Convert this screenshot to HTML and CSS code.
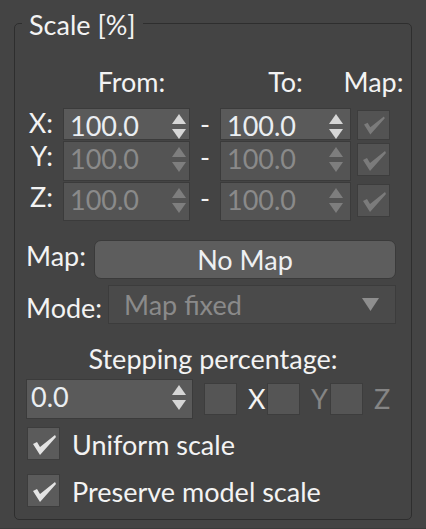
FILE: index.html
```html
<!DOCTYPE html>
<html>
<head>
<meta charset="utf-8">
<link rel="stylesheet" href="styles.css">
</head>
<body>
<fieldset class="group">
  <legend class="title">Scale [%]</legend>
  <div class="heads">
    <div></div>
    <div class="hdr from">From:</div>
    <div></div>
    <div class="hdr">To:</div>
    <div></div>
    <div class="hdr map">Map:</div>
  </div>
  <div class="axes">
    <div class="axis">X:</div>
    <div class="spin on"><span class="val">100.0</span><svg class="arr" viewBox="0 0 14 25" width="14" height="25"><polygon points="0,10 7,0 14,10"/><polygon points="0,15 14,15 7,25"/></svg></div>
    <div class="dash">-</div>
    <div class="spin on"><span class="val">100.0</span><svg class="arr" viewBox="0 0 14 25" width="14" height="25"><polygon points="0,10 7,0 14,10"/><polygon points="0,15 14,15 7,25"/></svg></div>
    <div></div>
    <div class="cb dis short"><svg viewBox="0 0 31 31" width="31" height="28"><path d="M5 15 L9 13 L12 18 L27 6 L28 8 L12 26 Z"/></svg></div>

    <div class="axis">Y:</div>
    <div class="spin off"><span class="val">100.0</span><svg class="arr" viewBox="0 0 14 25" width="14" height="25"><polygon points="0,10 7,0 14,10"/><polygon points="0,15 14,15 7,25"/></svg></div>
    <div class="dash">-</div>
    <div class="spin off"><span class="val">100.0</span><svg class="arr" viewBox="0 0 14 25" width="14" height="25"><polygon points="0,10 7,0 14,10"/><polygon points="0,15 14,15 7,25"/></svg></div>
    <div></div>
    <div class="cb dis"><svg viewBox="0 0 31 31" width="31" height="31"><path d="M5 16 L9 14 L12 19 L27 7 L28 9 L12 27 Z"/></svg></div>

    <div class="axis">Z:</div>
    <div class="spin off"><span class="val">100.0</span><svg class="arr" viewBox="0 0 14 25" width="14" height="25"><polygon points="0,10 7,0 14,10"/><polygon points="0,15 14,15 7,25"/></svg></div>
    <div class="dash">-</div>
    <div class="spin off"><span class="val">100.0</span><svg class="arr" viewBox="0 0 14 25" width="14" height="25"><polygon points="0,10 7,0 14,10"/><polygon points="0,15 14,15 7,25"/></svg></div>
    <div></div>
    <div class="cb dis"><svg viewBox="0 0 31 31" width="31" height="31"><path d="M5 16 L9 14 L12 19 L27 7 L28 9 L12 27 Z"/></svg></div>
  </div>

  <div class="maprow">
    <span class="lbl">Map:</span>
    <div class="btn">No Map</div>
  </div>
  <div class="moderow">
    <span class="lbl mode">Mode:</span>
    <div class="combo"><span class="ctext">Map fixed</span><svg class="carr" viewBox="0 0 17 13" width="17" height="13"><polygon points="0,0 17,0 8.5,13"/></svg></div>
  </div>

  <div class="steptitle">Stepping percentage:</div>
  <div class="steprow">
    <div class="spin on step"><span class="val">0.0</span><svg class="arr" viewBox="0 0 14 25" width="14" height="25"><polygon points="0,10 7,0 14,10"/><polygon points="0,15 14,15 7,25"/></svg></div>
    <div class="cb empty"></div>
    <span class="axl">X</span>
    <div class="cb empty"></div>
    <span class="axl grey">Y</span>
    <div class="cb empty"></div>
    <span class="axl grey">Z</span>
  </div>

  <div class="check first">
    <div class="cb en"><svg viewBox="0 0 31 31" width="31" height="31"><path d="M5 16 L9 14 L12 19 L27 7 L28 9 L12 27 Z"/></svg></div>
    <span class="ctl">Uniform scale</span>
  </div>
  <div class="check second">
    <div class="cb en"><svg viewBox="0 0 31 31" width="31" height="31"><path d="M5 16 L9 14 L12 19 L27 7 L28 9 L12 27 Z"/></svg></div>
    <span class="ctl">Preserve model scale</span>
  </div>
</fieldset>
<div class="footer"></div>
</body>
</html>
```

FILE: styles.css
```css
html, body {
  margin: 0;
  padding: 0;
}
body {
  background: #444444;
  font-family: Lato, "Open Sans", sans-serif;
  font-size: 27px;
  color: #f3f3f3;
  height: 529px;
  overflow: hidden;
}
.group {
  margin: 7px 0 0 14px;
  width: 398px;
  box-sizing: border-box;
  border: 1px solid #2e2e2e;
  border-radius: 5px;
  padding: 27px 11px 11px;
  min-inline-size: 0;
}
.title {
  padding: 4px 7px 0;
  margin-left: -4px;
  line-height: 28px;
}
.heads, .axes {
  display: grid;
  grid-template-columns: 37px 127px 30px 131px 6px 33px;
}
.heads {
  grid-template-rows: 32px;
  margin-bottom: 10px;
}
.hdr {
  line-height: 32px;
  text-align: center;
  white-space: nowrap;
}
.hdr.from {
  padding-left: 10px;
}
.hdr.map {
  justify-self: center;
}
.axes {
  grid-template-rows: 32px 40px 39px;
  row-gap: 1px;
}
.axis {
  line-height: 30px;
  text-align: right;
  padding-right: 10px;
  align-self: start;
}
.dash {
  line-height: 32px;
  text-align: center;
  align-self: start;
}
.spin {
  box-sizing: border-box;
  border: 1px solid #3b3b3b;
  display: grid;
  grid-template-columns: 102px 14px;
  align-items: start;
  padding-left: 6px;
}
.spin.on {
  background: #5a5a5a;
}
.spin.off {
  background: #545454;
  color: #8a8a8a;
}
.val {
  line-height: 32px;
  padding-top: 1px;
  color: inherit;
}
.spin.on .val {
  color: #eaeef2;
}
.arr {
  margin-top: 5px;
  display: block;
}
.spin.on .arr {
  fill: #d6d6d6;
}
.spin.off .arr {
  fill: #7e7e7e;
}
.cb {
  box-sizing: border-box;
  width: 33px;
  height: 33px;
  border: 1px solid #3d3d3d;
  align-self: start;
  margin-top: 2px;
}
.cb svg {
  display: block;
}
.cb.short {
  height: 30px;
}
.cb.dis {
  background: #535353;
  fill: #7b7b7b;
}
.cb.en {
  background: #5b5b5b;
  fill: #e4e4e4;
  margin-top: 0;
}
.cb.empty {
  background: #555555;
  width: 33px;
  height: 32px;
  margin-top: 4px;
}
.maprow, .moderow {
  display: flex;
  align-items: flex-start;
}
.maprow {
  margin-top: 19px;
}
.moderow {
  margin-top: 6px;
}
.lbl {
  width: 68px;
  line-height: 32px;
  flex: none;
}
.lbl.mode {
  width: 82px;
  padding-top: 7px;
}
.btn {
  box-sizing: border-box;
  width: 302px;
  height: 39px;
  border: 1px solid #3a3a3a;
  border-radius: 7px;
  background: #5d5d5d;
  text-align: center;
  line-height: 37px;
  color: #eef0f2;
}
.combo {
  box-sizing: border-box;
  width: 288px;
  height: 39px;
  border: 1px solid #3c3c3c;
  background: #4a4a4a;
  display: flex;
  align-items: center;
  padding: 0 16px 0 15px;
  color: #8a8a8a;
}
.ctext {
  line-height: 37px;
  flex: 1;
  align-self: flex-start;
}
.carr {
  fill: #8e8e8e;
  display: block;
}
.steptitle {
  margin-top: 19px;
  line-height: 32px;
  text-align: center;
}
.steprow {
  margin-top: 4px;
  display: flex;
  align-items: flex-start;
}
.spin.step {
  width: 167px;
  height: 40px;
  grid-template-columns: 141px 14px;
  padding-left: 4px;
  margin-right: 11px;
}
.axl {
  width: 30px;
  box-sizing: border-box;
  padding-left: 11px;
  line-height: 32px;
  margin-top: 4px;
}
.axl.grey {
  color: #858585;
}
.check {
  display: flex;
  align-items: flex-start;
  padding-left: 1px;
}
.check.first {
  margin-top: 8px;
}
.check.second {
  margin-top: 13px;
}
.ctl {
  margin-left: 12px;
  line-height: 33px;
  padding-top: 1px;
}
.footer {
  margin-top: 8px;
  height: 4px;
  background: #3b3b3b;
}
```
